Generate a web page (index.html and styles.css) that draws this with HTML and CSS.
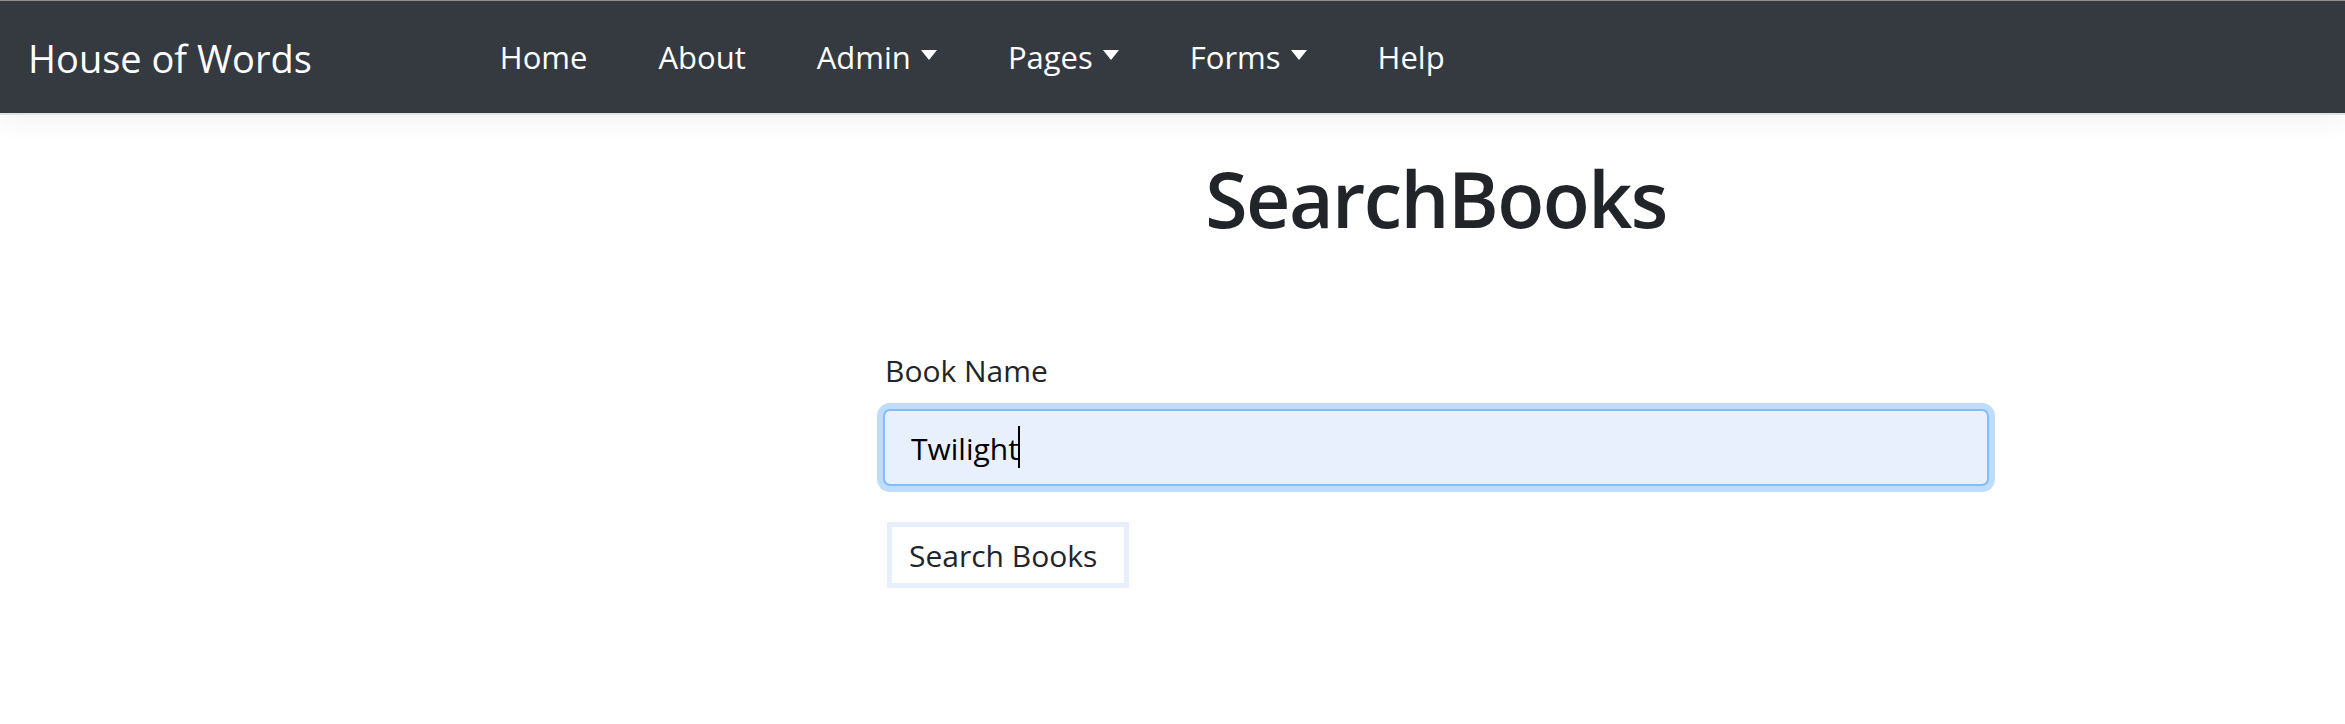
FILE: index.html
```html
<!DOCTYPE html>
<html lang="en">
<head>
<meta charset="utf-8">
<title>SearchBooks - House of Words</title>
<link rel="stylesheet" href="styles.css">
</head>
<body>
<header class="navbar">
  <a class="brand" href="#">House of Words</a>
  <nav>
    <ul class="nav-list">
      <li><a class="nav-link" href="#">Home</a></li>
      <li><a class="nav-link" href="#">About</a></li>
      <li><a class="nav-link dropdown" href="#">Admin<span class="caret"></span></a></li>
      <li><a class="nav-link dropdown" href="#">Pages<span class="caret"></span></a></li>
      <li><a class="nav-link dropdown" href="#">Forms<span class="caret"></span></a></li>
      <li><a class="nav-link" href="#">Help</a></li>
    </ul>
  </nav>
</header>
<main class="content">
  <h1 class="title">SearchBooks</h1>
  <form class="search-form">
    <label class="field-label" for="bookName">Book Name</label>
    <div class="field-wrap">
      <input class="field" id="bookName" type="text" value="Twilight">
      <span class="text-caret"></span>
    </div>
    <button class="search-btn" type="button">Search Books</button>
  </form>
</main>
</body>
</html>
```
FILE: styles.css
```css
* { box-sizing: border-box; }
html, body { margin: 0; padding: 0; }
body {
  font-family: "Open Sans", "Noto Sans", sans-serif;
  color: #212529;
  background: #fff;
}
a { text-decoration: none; }

.navbar {
  display: flex;
  align-items: center;
  height: 115px;
  background: #343a40;
  border-top: 1px solid #8e8e8e;
  border-bottom: 2px solid #dfe3e7;
  box-shadow: 0 10px 22px rgba(0, 0, 0, 0.045);
  padding-left: 28px;
}
.brand {
  color: #fff;
  font-size: 38px;
  line-height: 1;
  margin-top: 2px;
}
.nav-list {
  display: flex;
  align-items: center;
  gap: 71px;
  list-style: none;
  margin: 0 0 0 188px;
  padding: 0;
}
.nav-link {
  display: flex;
  align-items: center;
  color: #fff;
  font-size: 31px;
  line-height: 1;
}
.caret {
  width: 0;
  height: 0;
  margin-left: 10px;
  margin-top: -4px;
  border-top: 10px solid #fff;
  border-left: 8px solid transparent;
  border-right: 8px solid transparent;
}

.content {
  width: 1106px;
  margin-left: 883px;
}
.title {
  margin: 38px 0 0;
  text-align: center;
  font-size: 77px;
  font-weight: 600;
  letter-spacing: -1.5px;
  line-height: 1.2;
}
.search-form {
  display: flex;
  flex-direction: column;
  align-items: flex-start;
  margin-top: 103px;
}
.field-label {
  font-size: 30px;
  line-height: 45px;
  margin-left: 2px;
}
.field-wrap {
  position: relative;
  width: 100%;
  margin-top: 16px;
}
.field {
  display: block;
  width: 100%;
  height: 77px;
  padding: 2px 24px 0 26px;
  font-family: inherit;
  font-size: 30px;
  color: #000;
  background: #e8f0fe;
  border: 2px solid #80bdff;
  border-radius: 7px;
  box-shadow: 0 0 0 6px #bfdcfd;
  outline: none;
}
.text-caret {
  position: absolute;
  left: 135px;
  top: 17px;
  width: 2px;
  height: 42px;
  background: #000;
}
.search-btn {
  margin: 36px 0 0 4px;
  padding: 0 27px 0 17px;
  height: 66px;
  font-family: inherit;
  font-size: 30px;
  color: #212529;
  background: #fff;
  border: 5px solid #e7effc;
  border-radius: 0;
}
```
